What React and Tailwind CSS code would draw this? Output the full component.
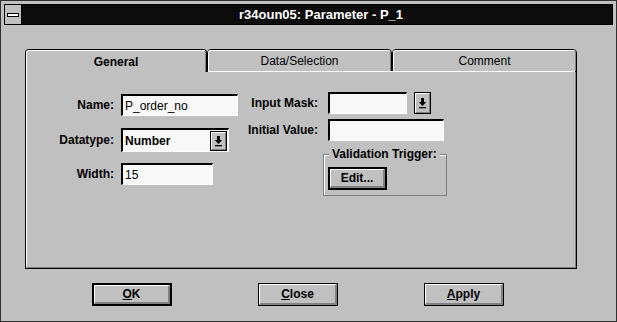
import React from 'react';

const font = { fontFamily: '"Liberation Sans", Arial, sans-serif' };

const DropArrow = () => (
  <svg width="9" height="12" viewBox="0 0 9 12">
    <path d="M3 1h3v4h2.2L4.5 9 0.8 5H3z" fill="#000" />
    <rect x="1" y="10" width="7" height="1.3" fill="#000" />
  </svg>
);

const ArrowButton = ({ className = '' }) => (
  <div className={`border border-black bg-[#c0c0c0] ${className}`}>
    <div className="w-full h-full border-t border-l border-white border-r border-b border-r-[#808080] border-b-[#808080] flex items-center justify-center">
      <DropArrow />
    </div>
  </div>
);

const Sunken = ({ className = '', children }) => (
  <div className={`border-t-2 border-l-2 border-t-black border-l-black border-r border-b border-r-white border-b-white bg-[#f8f8f8] ${className}`}>
    {children}
  </div>
);

const Button = ({ children, primary, className = '' }) => (
  <div className={`${primary ? 'border-2' : 'border'} border-black bg-[#c0c0c0] ${className}`}>
    <div className="w-full h-full border-t border-l border-white border-r-2 border-b-2 border-r-[#808080] border-b-[#808080] flex items-center justify-center text-[12px] font-bold">
      {children}
    </div>
  </div>
);

const Tab = ({ label, active, className = '' }) => (
  <div
    className={`${className} rounded-t-[4px] border-t border-l border-r border-black ${
      active ? 'h-[23px]' : 'h-[23px] border-b'
    }`}
  >
    <div
      className={`h-full rounded-t-[3px] border-t border-l border-white border-r border-r-[#808080] flex items-center justify-center text-[12px] ${
        active ? 'font-bold' : 'font-normal'
      }`}
    >
      {label}
    </div>
  </div>
);

export default function App() {
  return (
    <div style={font} className="w-[617px] h-[322px] bg-[#c0c0c0] border border-[#303030] p-[3px] text-black select-none">
      {/* title bar */}
      <div className="h-[21px] border border-black flex">
        <div className="w-[17px] bg-[#c0c0c0] border-r border-black flex items-center justify-center">
          <div className="w-[12px] h-[4px] bg-white border border-black" />
        </div>
        <div className="flex-1 bg-[#0c0c0c] text-white text-[13px] font-bold flex items-center justify-center pl-[8px]">
          r34oun05: Parameter - P_1
        </div>
      </div>

      {/* tabs */}
      <div className="flex mt-[24px] ml-[21px]">
        <Tab label="General" active className="w-[182px]" />
        <Tab label="Data/Selection" className="w-[185px]" />
        <Tab label="Comment" className="w-[185px]" />
      </div>

      {/* panel */}
      <div className="ml-[21px] w-[552px] h-[198px] border-l border-r border-b border-black -mt-px">
        <div className="w-full h-full border-l border-white border-r border-b border-r-[#808080] border-b-[#808080] flex flex-col">
          <div className="flex h-px">
            <div className="w-[181px]" />
            <div className="flex-1 bg-white" />
          </div>
          <div className="flex text-[12px]">
            {/* left column */}
            <div className="pl-[24px] pt-[22px] w-[212px]">
              <div className="flex items-center h-[22px]">
                <div className="w-[63px] text-right font-bold">Name:</div>
                <Sunken className="ml-[7px] w-[117px] h-[22px] flex items-center pl-[2px]">P_order_no</Sunken>
              </div>
              <div className="flex items-center h-[24px] mt-[12px]">
                <div className="w-[63px] text-right font-bold">Datatype:</div>
                <Sunken className="ml-[7px] w-[108px] h-[24px] flex items-center">
                  <div className="flex-1 pl-[2px] font-bold">Number</div>
                  <ArrowButton className="w-[17px] h-[20px] mr-px" />
                </Sunken>
              </div>
              <div className="flex items-center h-[22px] mt-[11px]">
                <div className="w-[63px] text-right font-bold">Width:</div>
                <Sunken className="ml-[7px] w-[92px] h-[22px] flex items-center pl-[2px]">15</Sunken>
              </div>
            </div>

            {/* right column */}
            <div className="pt-[20px] ml-px">
              <div className="flex items-center h-[22px]">
                <div className="w-[78px] text-right font-bold">Input Mask:</div>
                <Sunken className="ml-[10px] w-[79px] h-[22px]" />
                <ArrowButton className="ml-[7px] w-[17px] h-[22px]" />
              </div>
              <div className="flex items-center h-[22px] mt-[5px]">
                <div className="w-[78px] text-right font-bold">Initial Value:</div>
                <Sunken className="ml-[10px] w-[116px] h-[22px]" />
              </div>
              <div className="relative ml-[83px] mt-[13px] w-[124px] h-[42px] border border-[#808080]">
                <div className="w-full h-full border-t border-l border-white pl-[3px] pt-[11px]">
                  <Button primary className="w-[59px] h-[23px]">Edit...</Button>
                </div>
                <div className="absolute left-[5px] -top-[8px] bg-[#c0c0c0] px-[3px] font-bold leading-[15px]">
                  Validation Trigger:
                </div>
              </div>
            </div>
          </div>
        </div>
      </div>

      {/* buttons */}
      <div className="flex mt-[14px] ml-[88px] gap-[86px]">
        <Button primary className="w-[80px] h-[23px]">
          <span><span className="underline">O</span>K</span>
        </Button>
        <Button className="w-[80px] h-[23px]">
          <span><span className="underline">C</span>lose</span>
        </Button>
        <Button className="w-[80px] h-[23px]">
          <span><span className="underline">A</span>pply</span>
        </Button>
      </div>
    </div>
  );
}
